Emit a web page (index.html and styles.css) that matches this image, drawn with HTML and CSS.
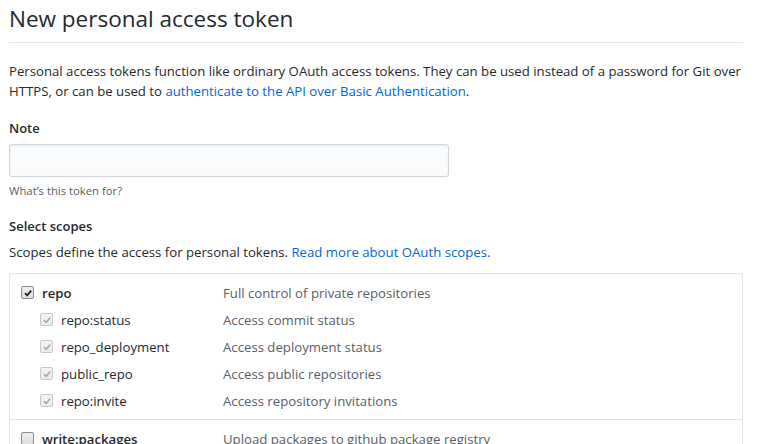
FILE: index.html
```html
<!DOCTYPE html>
<html>
<head>
<meta charset="utf-8">
<link rel="stylesheet" href="styles.css">
</head>
<body>
<div class="page">
  <div class="subhead">
    <h2 class="subhead-title">New personal access token</h2>
  </div>
  <p class="intro">Personal access tokens function like ordinary OAuth access tokens. They can be used instead of a password for Git over HTTPS, or can be used to <a href="#">authenticate to the API over Basic Authentication</a>.</p>

  <div class="form-group">
    <label class="form-label">Note</label>
    <input class="form-control" type="text">
    <p class="note">What’s this token for?</p>
  </div>

  <div class="form-group scopes-group">
    <label class="form-label">Select scopes</label>
    <p class="scopes-desc">Scopes define the access for personal tokens. <a href="#">Read more about OAuth scopes.</a></p>
  </div>

  <div class="scopes-box">
    <div class="scope-block">
      <div class="scope-row">
        <div class="scope-name"><span class="cb checked"><svg viewBox="0 0 10 10"><path d="M2 5.2 L4.2 7.4 L8.2 2.6" fill="none" stroke="#222" stroke-width="1.8"/></svg></span><span class="name strong">repo</span></div>
        <div class="scope-desc">Full control of private repositories</div>
      </div>
      <div class="scope-row sub">
        <div class="scope-name"><span class="cb disabled"><svg viewBox="0 0 10 10"><path d="M2 5.2 L4.2 7.4 L8.2 2.6" fill="none" stroke="#a6a6a6" stroke-width="1.6"/></svg></span><span class="name">repo:status</span></div>
        <div class="scope-desc">Access commit status</div>
      </div>
      <div class="scope-row sub">
        <div class="scope-name"><span class="cb disabled"><svg viewBox="0 0 10 10"><path d="M2 5.2 L4.2 7.4 L8.2 2.6" fill="none" stroke="#a6a6a6" stroke-width="1.6"/></svg></span><span class="name">repo_deployment</span></div>
        <div class="scope-desc">Access deployment status</div>
      </div>
      <div class="scope-row sub">
        <div class="scope-name"><span class="cb disabled"><svg viewBox="0 0 10 10"><path d="M2 5.2 L4.2 7.4 L8.2 2.6" fill="none" stroke="#a6a6a6" stroke-width="1.6"/></svg></span><span class="name">public_repo</span></div>
        <div class="scope-desc">Access public repositories</div>
      </div>
      <div class="scope-row sub">
        <div class="scope-name"><span class="cb disabled"><svg viewBox="0 0 10 10"><path d="M2 5.2 L4.2 7.4 L8.2 2.6" fill="none" stroke="#a6a6a6" stroke-width="1.6"/></svg></span><span class="name">repo:invite</span></div>
        <div class="scope-desc">Access repository invitations</div>
      </div>
    </div>
    <div class="scope-block">
      <div class="scope-row">
        <div class="scope-name"><span class="cb"></span><span class="name strong">write:packages</span></div>
        <div class="scope-desc">Upload packages to github package registry</div>
      </div>
    </div>
  </div>
</div>
</body>
</html>
```

FILE: styles.css
```css
html, body {
  margin: 0;
  padding: 0;
  background: #fff;
}
body {
  font-family: "Open Sans", "Noto Sans", sans-serif;
  font-size: 13.2px;
  color: #24292e;
  overflow: hidden;
}
.page {
  padding: 0 18px 0 9px;
}
.subhead {
  border-bottom: 1px solid #e1e4e8;
  padding-top: 3px;
  padding-bottom: 7px;
}
.subhead-title {
  margin: 0;
  font-size: 22.5px;
  font-weight: 400;
  line-height: 32px;
}
.intro {
  margin: 18px 0 0;
  line-height: 20px;
}
a {
  color: #0366d6;
  text-decoration: none;
}
.form-group {
  margin-top: 17px;
}
.form-label {
  display: block;
  font-weight: 600;
  font-size: 13px;
  line-height: 20px;
  margin-bottom: 6px;
}
.form-control {
  display: block;
  box-sizing: border-box;
  width: 440px;
  height: 33px;
  margin: 0;
  padding: 6px 8px;
  background: #fafbfc;
  border: 1px solid #d1d5da;
  border-radius: 3px;
  box-shadow: inset 0 1px 2px rgba(27,31,35,0.075);
}
.note {
  margin: 6px 0 0;
  font-size: 11.3px;
  line-height: 16px;
  color: #586069;
}
.scopes-group {
  margin-top: 17px;
}
.scopes-desc {
  margin: 0;
  line-height: 20px;
}
.scopes-box {
  margin-top: 11px;
  border: 1px solid #e1e4e8;
  border-radius: 3px;
  border-bottom: none;
  border-bottom-left-radius: 0;
  border-bottom-right-radius: 0;
}
.scope-block {
  padding: 5px 0 5px;
  border-bottom: 1px solid #e1e4e8;
}
.scope-row {
  display: flex;
  align-items: center;
  height: 27px;
}
.scope-name {
  box-sizing: border-box;
  width: 213px;
  display: flex;
  align-items: center;
  padding-left: 11px;
}
.scope-row.sub .scope-name {
  padding-left: 30px;
}
.cb {
  box-sizing: border-box;
  width: 13px;
  height: 13px;
  border: 1px solid #8f8f8f;
  border-radius: 2px;
  background: linear-gradient(#ededed, #dedede);
  display: inline-flex;
  align-items: center;
  justify-content: center;
  margin-right: 8px;
  flex: none;
}
.cb svg {
  width: 10px;
  height: 10px;
}
.cb.disabled {
  border-color: #c8c8c8;
  background: linear-gradient(#f4f4f4, #ececec);
}
.name {
  line-height: 20px;
}
.name.strong {
  font-weight: 600;
}
.scope-desc {
  color: #586069;
  line-height: 20px;
}
```
